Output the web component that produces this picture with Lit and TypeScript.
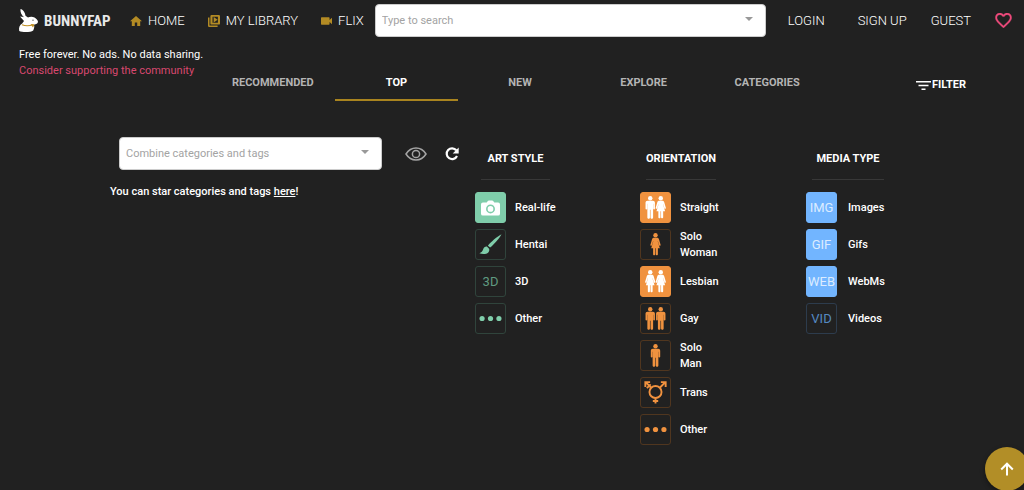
import { LitElement, html, svg, css, type TemplateResult, type SVGTemplateResult } from "lit";
import { customElement, property, state } from "lit/decorators.js";
import { classMap } from "lit/directives/class-map.js";

const man = (x: number) => svg`<g transform="translate(${x} 0)">
  <circle cx="5" cy="2.300" r="2.300"></circle>
  <path d="M2.200 5h5.600c1.300 0 2.100.9 2.100 2.100v6.200c0 1.100-1.700 1.100-1.700 0V8.200h-.2v14.200c0 1.700-2.700 1.700-2.700 0v-8h-.6v8c0 1.700-2.700 1.700-2.700 0V8.200h-.2v5.100c0 1.100-1.700 1.100-1.700 0V7.100C.1 5.900.9 5 2.200 5z"></path>
</g>`;

const woman = (x: number) => svg`<g transform="translate(${x} 0)">
  <circle cx="5" cy="2.300" r="2.300"></circle>
  <path d="M3.400 5h3.200c1.100 0 1.700.6 2 1.500l1.700 5.700c.3 1.100-1.200 1.500-1.500.5L7.500 8.600h-.2l2.200 7.400H7.500v6.200c0 1.400-2.200 1.400-2.200 0V16h-.6v6.200c0 1.400-2.200 1.400-2.200 0V16H.5l2.200-7.400h-.2l-1.300 4.100c-.3 1-1.800.6-1.500-.5l1.700-5.700c.3-.9.900-1.500 2-1.500z"></path>
</g>`;

const people = (...figures: SVGTemplateResult[]) =>
  html`<svg class="glyph" viewBox="0 0 23 24" fill="currentColor" aria-hidden="true">${figures}</svg>`;

const dots = html`<svg class="glyph" viewBox="0 0 24 24" fill="currentColor" aria-hidden="true">
  <circle cx="3.200" cy="12" r="2.700"></circle><circle cx="12" cy="12" r="2.700"></circle><circle cx="20.800" cy="12" r="2.700"></circle>
</svg>`;

const camera = html`<svg class="glyph small" viewBox="0 0 20 16" fill="currentColor" fill-rule="evenodd" aria-hidden="true">
  <path d="M2 2.200h4L7.200.5Q7.500 0 8.200 0h3.600q.7 0 1 .5L14 2.200h4a2 2 0 0 1 2 2V14a2 2 0 0 1-2 2H2a2 2 0 0 1-2-2V4.200a2 2 0 0 1 2-2zM10 4.300a4.700 4.700 0 1 0 0 9.400 4.700 4.700 0 0 0 0-9.400zm0 1.700a3 3 0 1 1 0 6 3 3 0 0 1 0-6z"></path>
</svg>`;

const brush = html`<svg class="glyph" viewBox="0 0 24 24" fill="currentColor" aria-hidden="true">
  <path d="M23.500 1.300C19 3.700 12.500 9 9.300 13.200l2.300 2C16 11.500 21.500 5.500 23.500 1.300z"></path>
  <path d="M8.300 14.200c-2-.2-3.300.9-3.900 2.700-.7 2-1.800 3.300-4 4.300 3.200 1.200 7.300 1.100 9.300-.9 1.100-1.200 1.300-2.500.8-3.800z"></path>
</svg>`;

const trans = html`<svg class="glyph" viewBox="0 0 24 24" fill="none" stroke="currentColor" stroke-width="2" aria-hidden="true">
  <circle cx="12" cy="11.500" r="6.300"></circle>
  <path d="M7.500 7 2 1.500M16.500 7 22 1.500M1.400 6.200V1.200h5M22.600 6.200V1.200h-5M3 7.500l4-4M12 18v5.500M9.200 20.800h5.600"></path>
</svg>`;

type Choice = { label: string; icon: TemplateResult | string; on?: boolean };

@customElement("filter-group")
class FilterGroup extends LitElement {
  @property() heading = "";
  @property({ attribute: false }) choices: Choice[] = [];
  @state() private flipped = new Set<string>();

  static styles = css`
    :host { display: block; }
    .heading {
      margin: 0 6px 12px;
      height: 43px;
      box-sizing: border-box;
      border-bottom: 1px solid #383838;
      font-size: 11px;
      line-height: 16px;
      padding-top: 14px;
      font-weight: 700;
      text-align: center;
      white-space: nowrap;
    }
    .list { display: flex; flex-direction: column; gap: 6px; }
    .choice {
      display: flex;
      align-items: center;
      gap: var(--label-gap, 9px);
      height: 31px;
      padding: 0;
      border: 0;
      background: none;
      color: #fff;
      font: 500 11px/16px Roboto, sans-serif;
      text-align: left;
      cursor: pointer;
    }
    .tile {
      flex: none;
      display: grid;
      place-items: center;
      box-sizing: border-box;
      width: 31px;
      height: 31px;
      border: 1px solid var(--edge);
      border-radius: 3px;
      color: var(--accent);
      font-size: 13px;
      font-weight: 400;
    }
    .tile.word { color: var(--word); }
    .on .tile { background: var(--accent); border-color: var(--accent); color: #fff; }
    .on .tile.word { color: #dcecff; }
    .glyph { width: 23px; height: 23px; display: block; }
    .small { width: 19px; height: 16px; }
  `;

  private toggle(label: string) {
    const next = new Set(this.flipped);
    next.has(label) ? next.delete(label) : next.add(label);
    this.flipped = next;
  }

  render() {
    return html`
      <h2 class="heading">${this.heading}</h2>
      <div class="list">
        ${this.choices.map((c) => {
          const on = !!c.on !== this.flipped.has(c.label);
          return html`<button
            type="button"
            class=${classMap({ choice: true, on })}
            aria-pressed=${on ? "true" : "false"}
            @click=${() => this.toggle(c.label)}
          >
            <span class=${classMap({ tile: true, word: typeof c.icon === "string" })}>${c.icon}</span>
            <span>${c.label}</span>
          </button>`;
        })}
      </div>
    `;
  }
}

@customElement("combo-field")
class ComboField extends LitElement {
  @property() hint = "";

  static styles = css`
    :host { display: block; }
    .field {
      display: flex;
      align-items: center;
      box-sizing: border-box;
      height: 33px;
      padding: 0 10px 0 6px;
      background: #fff;
      border: 1px solid #ccc;
      border-radius: 4px;
    }
    .input {
      flex: 1;
      min-width: 0;
      padding: 0;
      border: 0;
      outline: 0;
      background: none;
      color: #333;
      font: 400 11px/16px Roboto, sans-serif;
    }
    .input::placeholder { color: #a3a3a3; opacity: 1; }
    .open { display: flex; padding: 0 2px 3px; border: 0; background: none; cursor: pointer; }
  `;

  render() {
    return html`<div class="field">
      <input class="input" type="text" placeholder=${this.hint} aria-label=${this.hint} />
      <button class="open" type="button" aria-label="Open list">
        <svg width="8" height="4" viewBox="0 0 8 4" fill="#999" aria-hidden="true"><path d="M0 0h8L4 4z"></path></svg>
      </button>
    </div>`;
  }
}

@customElement("app-root")
class AppRoot extends LitElement {
  @state() private tab = "TOP";

  private tabs = ["RECOMMENDED", "TOP", "NEW", "EXPLORE", "CATEGORIES"];

  private art: Choice[] = [
    { label: "Real-life", icon: camera, on: true },
    { label: "Hentai", icon: brush },
    { label: "3D", icon: "3D" },
    { label: "Other", icon: dots },
  ];

  private orientation: Choice[] = [
    { label: "Straight", icon: people(man(1), woman(12)), on: true },
    { label: "Solo Woman", icon: people(woman(6.5)) },
    { label: "Lesbian", icon: people(woman(1), woman(12)), on: true },
    { label: "Gay", icon: people(man(1), man(12)) },
    { label: "Solo Man", icon: people(man(6.5)) },
    { label: "Trans", icon: trans },
    { label: "Other", icon: dots },
  ];

  private media: Choice[] = [
    { label: "Images", icon: "IMG", on: true },
    { label: "Gifs", icon: "GIF", on: true },
    { label: "WebMs", icon: "WEB", on: true },
    { label: "Videos", icon: "VID" },
  ];

  static styles = css`
    :host {
      display: block;
      min-height: 100vh;
      background: #212121;
      color: #fff;
      font: 400 11px/16px Roboto, sans-serif;
    }
    a { color: inherit; text-decoration: none; }
    svg { display: block; flex: none; }
    .bar { display: flex; align-items: center; height: 41px; padding: 0 12px 0 18px; }
    .brand {
      display: flex;
      align-items: center;
      gap: 5px;
      width: 112px;
      color: #e8e8e8;
      font: 700 15px/20px "Roboto Condensed", "Open Sans Condensed", Roboto, sans-serif;
    }
    .menu { display: flex; gap: 23px; padding-right: 11px; }
    .link {
      display: flex;
      align-items: center;
      gap: 6px;
      font-size: 13px;
      line-height: 20px;
      font-weight: 300;
      color: #fff;
      white-space: nowrap;
    }
    .search { flex: 1; }
    .account { display: flex; align-items: center; padding-left: 22px; gap: 24px; }
    .account .link:first-child { margin-right: 9px; }
    .plain { display: flex; align-items: center; padding: 0; border: 0; background: none; color: #fff; cursor: pointer; font: inherit; }
    .sub { display: flex; padding: 5px 58px 0 19px; }
    .tagline { flex: 1; white-space: nowrap; padding-top: 1px; }
    .tagline p { margin: 0; }
    .pink { color: #d9486f; }
    .tabs { flex: none; width: 618px; display: grid; grid-template-columns: repeat(5, 1fr); }
    .tab {
      height: 55px;
      padding: 20px 0 0;
      border: 0;
      border-bottom: 2px solid transparent;
      background: none;
      color: #b4b4b4;
      font: 700 11px/16px Roboto, sans-serif;
      cursor: pointer;
    }
    .tab.current { color: #fff; border-color: #a9841f; }
    .filter { flex: 1; max-width: 137px; display: flex; justify-content: flex-end; align-items: flex-start; padding-top: 31px; }
    .filter .plain { gap: 1px; font-weight: 700; }
    .panel { display: flex; padding: 36px 134px 40px 110px; justify-content: space-between; }
    .combine { display: flex; align-items: center; padding-left: 9px; }
    .tags { width: 263px; margin-right: 23px; }
    .eye { margin-right: 18px; }
    .note { margin: 14px 0 0; font-weight: 500; }
    .note a { text-decoration: underline; }
    .groups { display: flex; gap: 84px; }
    .green { --accent: #7fcdaa; --edge: #30443c; --word: #5f9a80; width: 81px; white-space: nowrap; }
    .orange { --accent: #f0923f; --edge: #50361f; width: 82px; }
    .blue { --accent: #72b5ff; --edge: #2d3c4d; --word: #5589c2; --label-gap: 11px; width: 84px; }
    .up {
      position: fixed;
      right: -5px;
      bottom: -1px;
      width: 44px;
      height: 44px;
      padding: 0;
      display: grid;
      place-items: center;
      border: 0;
      border-radius: 50%;
      background: #b28e27;
      box-shadow: 0 2px 5px #0006;
      cursor: pointer;
    }
  `;

  render() {
    return html`
      <header class="bar">
        <a class="brand" href="#">
          <svg width="21" height="25" viewBox="0 0 21 25" aria-hidden="true">
            <path fill="#fff" d="M2.500 1c2.500.5 4.500 3.500 5 6.700L10 9.500c1.500-.7 4.500-1 6.500 0 2 1.100 3.200 2.600 3.500 4.300-.3 1.800-1.700 2.700-4 2.900.8 2-.1 4.100-.8 5.700C13 24.400 4.500 24.500 1.200 23 .6 19.500 1.600 17 4.200 15.600L6 13 2 8.500c2 .2 3 .3 4 .8C3.500 7 2 4 2.500 1z"></path>
            <path fill="none" stroke="#c08f22" stroke-width="1.200" d="M4 16.800c4 1.500 7.500 1.200 11.500-.3"></path>
            <path fill="#c08f22" d="m12.500 16 2.500 3.500 1.500-3z"></path>
            <circle cx="15" cy="12.200" r=".6" fill="#333"></circle>
          </svg>
          <span>BUNNYFAP</span>
        </a>
        <nav class="menu">
          <a class="link" href="#">
            <svg width="12" height="12" viewBox="2 2 20 19" fill="#b38b24" aria-hidden="true"><path d="M10 20v-6h4v6h5v-8h3L12 3 2 12h3v8z"></path></svg>HOME</a>
          <a class="link" href="#">
            <svg width="12" height="12" viewBox="2 2 20 20" fill="#b38b24" fill-rule="evenodd" aria-hidden="true"><path d="M4.500 6H2v14a2 2 0 0 0 2 2h14v-2.500H4.500zM20 2H8a2 2 0 0 0-2 2v12a2 2 0 0 0 2 2h12a2 2 0 0 0 2-2V4a2 2 0 0 0-2-2zM9.500 5h9v10h-9zM11.500 5.500v9l6.500-4.500z"></path></svg>MY LIBRARY</a>
          <a class="link" href="#">
            <svg width="11" height="10" viewBox="3 5 18 14" fill="#b38b24" aria-hidden="true"><path d="M17 10.500V7a1 1 0 0 0-1-1H4a1 1 0 0 0-1 1v10a1 1 0 0 0 1 1h12a1 1 0 0 0 1-1v-3.500l4 4v-11z"></path></svg>FLIX</a>
        </nav>
        <combo-field class="search" hint="Type to search"></combo-field>
        <nav class="account">
          <a class="link" href="#">LOGIN</a>
          <a class="link" href="#">SIGN UP</a>
          <a class="link" href="#">GUEST</a>
          <button class="plain" type="button" aria-label="Support">
            <svg width="17" height="15" viewBox="2 3 20 18.400" fill="#ee4b7c" stroke="#ee4b7c" stroke-width=".4" aria-hidden="true"><path d="M16.500 3c-1.740 0-3.410.81-4.500 2.090C10.910 3.810 9.240 3 7.500 3 4.420 3 2 5.420 2 8.500c0 3.780 3.400 6.860 8.550 11.540L12 21.350l1.450-1.320C18.600 15.360 22 12.280 22 8.500 22 5.420 19.580 3 16.500 3zm-4.400 15.550-.1.100-.1-.1C7.140 14.240 4 11.390 4 8.500 4 6.500 5.500 5 7.500 5c1.540 0 3.040.99 3.570 2.360h1.870C13.460 5.990 14.960 5 16.500 5c2 0 3.500 1.500 3.500 3.500 0 2.890-3.140 5.740-7.900 10.050z"></path></svg>
          </button>
        </nav>
      </header>

      <div class="sub">
        <div class="tagline">
          <p>Free forever. No ads. No data sharing.</p>
          <p><a class="pink" href="#">Consider supporting the community</a></p>
        </div>
        <nav class="tabs">
          ${this.tabs.map(
            (t) => html`<button
              type="button"
              class=${classMap({ tab: true, current: t === this.tab })}
              @click=${() => (this.tab = t)}
            >${t}</button>`
          )}
        </nav>
        <div class="filter">
          <button class="plain" type="button">
            <svg width="15" height="9" viewBox="0 0 15 9" fill="#fff" aria-hidden="true"><path d="M0 0h15v1.500H0zM2.500 3.700h10v1.500h-10zM5.500 7.400h4v1.500h-4z"></path></svg>FILTER
          </button>
        </div>
      </div>

      <main class="panel">
        <section>
          <div class="combine">
            <combo-field class="tags" hint="Combine categories and tags"></combo-field>
            <button class="plain eye" type="button" aria-label="Show">
              <svg width="22" height="14" viewBox="0 0 22 14" fill="none" stroke="#a4a4a4" stroke-width="1.500" aria-hidden="true"><path d="M1 7c2.500-4 6-6 10-6s7.500 2 10 6c-2.500 4-6 6-10 6S3.500 11 1 7z"></path><circle cx="11" cy="7" r="3.600"></circle></svg>
            </button>
            <button class="plain" type="button" aria-label="Reload">
              <svg width="14" height="14" viewBox="0 0 14 14" aria-hidden="true"><path fill="none" stroke="#fff" stroke-width="2.200" d="M11.300 3.300A5.400 5.400 0 1 0 12 9"></path><path fill="#fff" d="M13.700.5v6H7.700z"></path></svg>
            </button>
          </div>
          <p class="note">You can star categories and tags <a href="#">here</a>!</p>
        </section>
        <div class="groups">
          <filter-group class="green" heading="ART STYLE" .choices=${this.art}></filter-group>
          <filter-group class="orange" heading="ORIENTATION" .choices=${this.orientation}></filter-group>
          <filter-group class="blue" heading="MEDIA TYPE" .choices=${this.media}></filter-group>
        </div>
      </main>

      <button class="up" type="button" aria-label="Back to top">
        <svg width="14" height="14" viewBox="0 0 14 14" fill="none" stroke="#fff" stroke-width="2" aria-hidden="true"><path d="M7 13.500V2M1.200 7.500 7 1.700l5.800 5.800"></path></svg>
      </button>
    `;
  }
}
